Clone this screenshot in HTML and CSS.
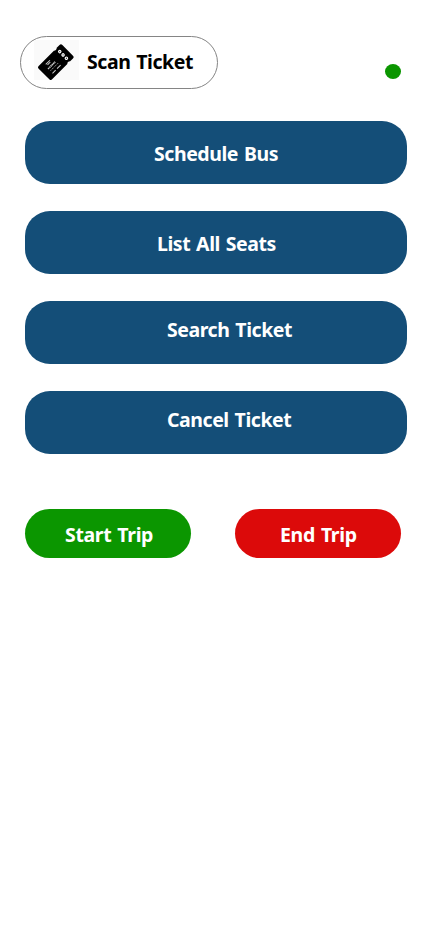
FILE: index.html
```
<!DOCTYPE html>
<html lang="en">
<head>
<meta charset="utf-8">
<title>Scan Ticket</title>
<link rel="stylesheet" href="styles.css">
</head>
<body>
<header class="top">
  <button class="scan">
    <svg class="ticket" viewBox="0 0 45 40" aria-hidden="true">
      <g transform="translate(22 22) rotate(-45)">
        <path d="M-15 -9.500H6.500q2 2 4 0H14.500a2 2 0 0 1 2 2V7.500a2 2 0 0 1-2 2H10.500q-2-2-4 0H-15a2 2 0 0 1-2-2V-7.500a2 2 0 0 1 2-2Z"/>
        <g class="holes"><circle cx="10" cy="-4.700" r="1.750"/><circle cx="10" cy="0" r="1.750"/><circle cx="10" cy="4.700" r="1.750"/></g>
        <g class="cores"><circle cx="10" cy="-4.700" r=".6"/><circle cx="10" cy="0" r=".6"/><circle cx="10" cy="4.700" r=".6"/></g>
        <g class="marks"><path d="M-9 -5.500H-3M-8 -4H-4" stroke-width="1"/><path d="M-10.500 -.7H-.5" stroke-width="1.700" stroke-dasharray="1.300 .5"/><path d="M-10 2.300H1" stroke-width=".7" stroke-dasharray="1.500 .8"/><path d="M-10.500 5.500H-6M-4 5.500H1" stroke-width="1"/></g>
      </g>
    </svg>
    <span class="label scan-label">Scan Ticket</span>
  </button>
  <span class="status"></span>
</header>
<main>
  <nav class="menu">
    <button class="item"><span class="label schedule">Schedule Bus</span></button>
    <button class="item"><span class="label seats">List All Seats</span></button>
    <button class="item raised"><span class="label search">Search Ticket</span></button>
    <button class="item raised"><span class="label cancel">Cancel Ticket</span></button>
  </nav>
  <div class="trip">
    <button class="trip-button start"><span class="label">Start Trip</span></button>
    <button class="trip-button end"><span class="label">End Trip</span></button>
  </div>
</main>
</body>
</html>
```
FILE: styles.css
```
* { box-sizing: border-box; }
body { margin: 0; min-height: 926px; background: #fff; font-family: "Noto Sans", sans-serif; }
button { display: flex; align-items: flex-start; margin: 0; padding: 0; border: 0; font: inherit; color: #fff; text-align: left; }
.label { font-size: 19.5px; line-height: 20px; font-weight: 700; letter-spacing: -0.45px; word-spacing: 1.3px; white-space: nowrap; }
.top { display: flex; justify-content: space-between; padding: 36px 27px 0 20px; }
.scan { width: 198px; height: 53px; padding: 3px 0 0 13px; border: 1px solid #858585; border-radius: 27px; background: #fff; color: #000; }
.ticket { width: 45px; height: 40px; background: #fafafa; flex: none; }
.holes { fill: #fff; }
.cores { fill: #333; }
.marks { fill: none; stroke: #ccc; }
.scan-label { margin: 12px 0 0 8px; }
.status { width: 16px; height: 15px; margin-top: 28px; border-radius: 50%; background: #0b9600; }
.menu { display: grid; gap: 27px; padding: 32px 21px 0 25px; }
.item { height: 63px; padding: 23px 0 0 129px; border-radius: 25px; background: #144e78; }
.item .seats { margin-left: 3px; }
.raised { padding: 19px 0 0 142px; }
.trip { display: flex; gap: 44px; padding: 55px 0 0 25px; }
.trip-button { width: 166px; height: 49px; padding-top: 16px; border-radius: 25px; }
.trip-button .label { letter-spacing: -0.35px; }
.start { padding-left: 40px; background: #0b9600; }
.end { padding-left: 45px; background: #dc0a0a; }
```
